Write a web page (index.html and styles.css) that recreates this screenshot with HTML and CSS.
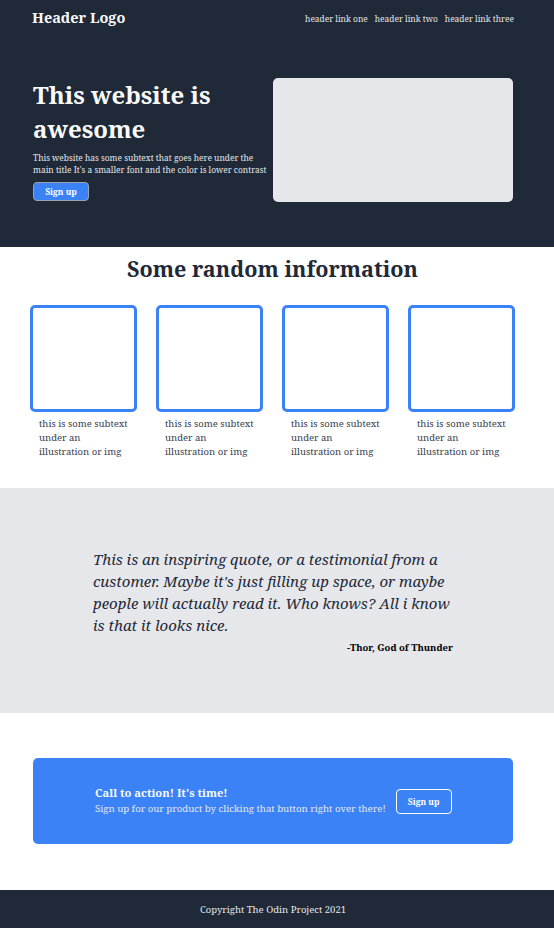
FILE: index.html
```html
<!DOCTYPE html>
<html lang="en">
<head>
<meta charset="utf-8">
<title>Landing</title>
<link rel="stylesheet" href="styles.css">
</head>
<body>
<div class="top">
  <header class="header">
    <div class="logo">Header Logo</div>
    <nav class="links">
      <a href="#">header link one</a>
      <a href="#">header link two</a>
      <a href="#">header link three</a>
    </nav>
  </header>
  <section class="hero">
    <div class="hero-text">
      <h1>This website is awesome</h1>
      <p>This website has some subtext that goes here under the main title It's a smaller font and the color is lower contrast</p>
      <button class="btn">Sign up</button>
    </div>
    <div class="hero-img"></div>
  </section>
</div>
<section class="info">
  <h2>Some random information</h2>
  <div class="cards">
    <div class="card"><div class="box"></div><p>this is some subtext under an illustration or img</p></div>
    <div class="card"><div class="box"></div><p>this is some subtext under an illustration or img</p></div>
    <div class="card"><div class="box"></div><p>this is some subtext under an illustration or img</p></div>
    <div class="card"><div class="box"></div><p>this is some subtext under an illustration or img</p></div>
  </div>
</section>
<section class="quote">
  <div class="quote-inner">
    <p class="q">This is an inspiring quote, or a testimonial from a customer. Maybe it's just filling up space, or maybe people will actually read it. Who knows? All i know is that it looks nice.</p>
    <p class="who">-Thor, God of Thunder</p>
  </div>
</section>
<section class="cta-wrap">
  <div class="cta">
    <div class="cta-text">
      <div class="cta-title">Call to action! It's time!</div>
      <div class="cta-sub">Sign up for our product by clicking that button right over there!</div>
    </div>
    <button class="btn-outline">Sign up</button>
  </div>
</section>
<footer class="footer">Copyright The Odin Project 2021</footer>
</body>
</html>
```
FILE: styles.css
```css
* { box-sizing: border-box; }
body {
  margin: 0;
  font-family: "Noto Serif", "DejaVu Serif", serif;
  color: #1f2937;
}
.top { background: #1f2937; height: 247px; }
.header {
  display: flex;
  justify-content: space-between;
  align-items: center;
  padding: 8px 40px 0 32px;
  height: 26px;
}
.logo { color: #f9fafb; font-weight: bold; font-size: 14.5px; }
.links { display: flex; gap: 7px; padding-top: 3px; }
.links a { color: #e5e7eb; text-decoration: none; font-size: 8.4px; }
.hero {
  display: flex;
  justify-content: space-between;
  align-items: center;
  padding: 51px 41px 0 33px;
}
.hero-text { width: 238px; }
.hero h1 {
  margin: 0;
  color: #f9fafb;
  font-size: 24px;
  line-height: 34px;
  font-weight: bold;
}
.hero p {
  margin: 6px 0 6px;
  color: #e5e7eb;
  font-size: 8.4px;
  line-height: 12px;
}
.btn {
  display: block;
  font-family: inherit;
  background: #3b82f6;
  color: #fff;
  font-weight: bold;
  font-size: 8.5px;
  width: 56px;
  height: 19px;
  border: 1px solid #9ca3af;
  border-radius: 4px;
  padding: 0;
}
.hero-img {
  width: 240px;
  height: 124px;
  background: #e5e7eb;
  border-radius: 5px;
  margin-top: 1px;
}
.info { height: 241px; padding: 8px 39px 0 30px; }
.info h2 {
  margin: 0;
  text-align: center;
  font-size: 21.6px;
  line-height: 28px;
  font-weight: bold;
  color: #1f2937;
}
.cards {
  display: flex;
  gap: 19px;
  padding-top: 22px;
}
.card { width: 107px; }
.box {
  width: 107px;
  height: 107px;
  border: 3px solid #3b82f6;
  border-radius: 5px;
}
.card p {
  margin: 5px 0 0 9px;
  width: 92px;
  font-size: 9.5px;
  line-height: 14px;
  color: #374151;
}
.quote {
  background: #e5e7eb;
  height: 225px;
  display: flex;
  justify-content: center;
  padding: 60px 8px 0 0;
}
.quote-inner { width: 360px; }
.q {
  margin: 0;
  font-style: italic;
  font-size: 15px;
  line-height: 22px;
  color: #1f2937;
}
.who {
  margin: 5px 0 0;
  text-align: right;
  font-weight: bold;
  font-size: 9.5px;
  color: #000;
}
.cta-wrap { height: 177px; padding: 45px 41px 0 33px; }
.cta {
  background: #3b82f6;
  border-radius: 5px;
  height: 86px;
  display: flex;
  align-items: center;
  padding-left: 62px;
  gap: 10px;
}
.cta-title { color: #f9fafb; font-weight: bold; font-size: 11.2px; line-height: 16px; }
.cta-sub { color: #e5e7eb; font-size: 9.6px; line-height: 16px; }
.btn-outline {
  font-family: inherit;
  background: transparent;
  color: #fff;
  border: 1px solid #fff;
  border-radius: 4px;
  font-weight: bold;
  font-size: 8.5px;
  width: 56px;
  height: 25px;
  padding: 0;
}
.footer {
  background: #1f2937;
  color: #e5e7eb;
  text-align: center;
  font-size: 9.5px;
  height: 38px;
  line-height: 40px;
  padding-right: 8px;
}
```
